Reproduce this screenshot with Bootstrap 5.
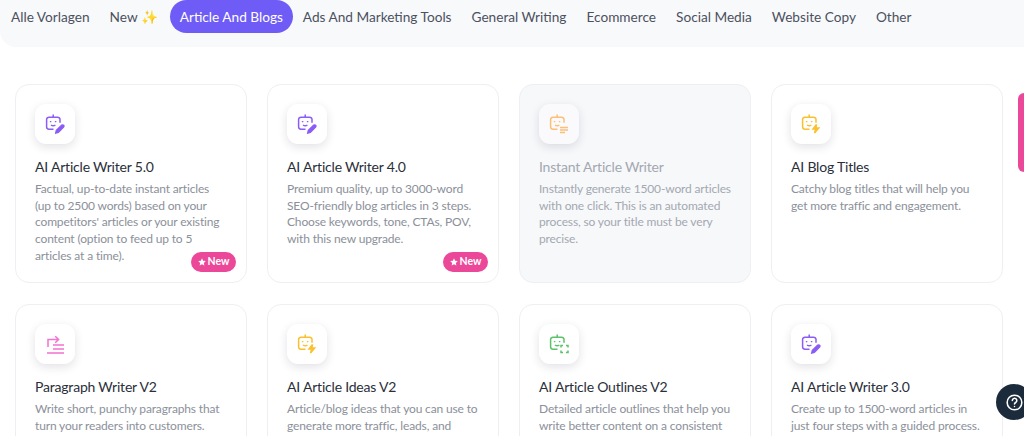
<!DOCTYPE html>
<html lang="en">
<head>
    <meta charset="UTF-8">
    <meta name="viewport" content="width=device-width, initial-scale=1.0">
    <title>Vorlagen</title>
    <link href="https://cdn.jsdelivr.net/npm/bootstrap@5.3.0/dist/css/bootstrap.min.css" rel="stylesheet">
    <script src="https://cdn.jsdelivr.net/npm/bootstrap@5.3.0/dist/js/bootstrap.bundle.min.js"></script>
    <style>
        html, body {
            height: 436px;
            overflow: hidden;
        }
        body {
            font-family: "Lato", "Liberation Sans", sans-serif;
            background: #fff;
            position: relative;
        }
        .tab-bar {
            height: 47px;
            background: #f8f9fb;
            border-bottom-left-radius: 16px;
            padding-left: 1px;
        }
        .tab-link {
            display: block;
            height: 33px;
            line-height: 35px;
            padding: 0 10px;
            font-size: 13.65px;
            color: #4b5160;
            text-decoration: none;
            border-radius: 17px;
            white-space: nowrap;
        }
        .tab-link.on {
            background: #6f5cf6;
            color: #fff;
            margin-left: 2px;
            width: 123px;
            text-align: center;
            padding: 0;
        }
        .tool-area {
            height: 389px;
            overflow: hidden;
        }
        .tool-grid {
            display: grid;
            grid-template-columns: repeat(4, 232px);
            gap: 21px 20px;
            padding: 37px 0 0 15px;
        }
        .tool-card {
            height: 199px;
            border: 1px solid #eeeff2;
            border-radius: 14px;
            padding: 19px;
            position: relative;
            background: #fff;
        }
        .tool-card.off {
            background: #f7f8fa;
        }
        .tool-card.off .tool-title, .tool-card.off .tool-text {
            color: #a3a8b1;
        }
        .tool-card.off .icon-box {
            background: #fafafc;
        }
        .icon-box {
            width: 40px;
            height: 40px;
            border-radius: 11px;
            background: #fff;
            box-shadow: 0 3px 10px rgba(30, 30, 60, .13);
            margin-bottom: 14px;
        }
        .icon-box svg {
            width: 20px;
            height: 20px;
            fill: none;
            stroke-width: 1.5;
        }
        .tool-title {
            font-size: 14px;
            letter-spacing: -.2px;
            line-height: 18px;
            font-weight: 400;
            color: #2a2f3a;
            margin-bottom: 5px;
        }
        .tool-text {
            font-size: 12px;
            letter-spacing: -.15px;
            line-height: 16.7px;
            color: #8b909a;
            margin: 0;
        }
        .new-tag {
            position: absolute;
            right: 10px;
            bottom: 10px;
            height: 20px;
            width: 45px;
            border-radius: 10px;
            background: #ec4899;
            color: #fff;
            font-size: 10.5px;
            font-weight: 700;
            gap: 2px;
        }
        .new-tag svg {
            width: 8px;
            height: 8px;
            fill: #fff;
        }
        .side-tab {
            position: absolute;
            right: 0;
            top: 93px;
            width: 6px;
            height: 79px;
            background: #ec4899;
            border-radius: 6px 0 0 6px;
        }
        .help-btn {
            position: absolute;
            left: 996px;
            top: 384px;
            width: 36px;
            height: 36px;
            border-radius: 50%;
            background: #1c2b3c;
        }
    </style>
</head>
<body>
<!-- Category tabs -->
<div class="tab-bar d-flex align-items-start">
    <a class="tab-link" href="#">Alle Vorlagen</a>
    <a class="tab-link" href="#">New ✨</a>
    <a class="tab-link on" href="#">Article And Blogs</a>
    <a class="tab-link" href="#">Ads And Marketing Tools</a>
    <a class="tab-link" href="#">General Writing</a>
    <a class="tab-link" href="#">Ecommerce</a>
    <a class="tab-link" href="#">Social Media</a>
    <a class="tab-link" href="#">Website Copy</a>
    <a class="tab-link" href="#">Other</a>
</div>

<!-- Shared icon parts -->
<svg width="0" height="0" class="position-absolute">
    <defs>
        <g id="bot">
            <path d="M8.2 .4v2.8"/>
            <path d="M8.5 15.2H4a2.4 2.4 0 0 1-2.4-2.4V5.6A2.4 2.4 0 0 1 4 3.2h8.6A2.4 2.4 0 0 1 15 5.6v3.2"/>
            <path d="M5.6 7v1.2M10.6 7v1.2M6 11c1.2.9 3.2.9 4.4 0"/>
        </g>
        <g id="pen">
            <path d="M10.8 19l.6-2.6 5.4-5.2c1.5-.8 2.6.5 1.7 1.8l-5.2 5.3z"/>
        </g>
        <path id="star5" d="M5 .4l1.4 3 3.3.4-2.4 2.3.6 3.3L5 7.8 2.1 9.4l.6-3.3L.3 3.8l3.3-.4z"/>
    </defs>
</svg>

<div class="tool-area">
<div class="tool-grid">
    <div class="tool-card">
        <div class="icon-box d-flex align-items-center justify-content-center">
            <svg viewBox="0 0 20 20" stroke="#8b5cf6"><use href="#bot"/><use href="#pen" fill="#8b5cf6"/></svg>
        </div>
        <h5 class="tool-title">AI Article Writer 5.0</h5>
        <p class="tool-text">Factual, up-to-date instant articles (up to 2500 words) based on your competitors' articles or your existing content (option to feed up to 5 articles at a time).</p>
        <span class="new-tag d-flex align-items-center justify-content-center"><svg viewBox="0 0 10 10"><use href="#star5"/></svg>New</span>
    </div>
    <div class="tool-card">
        <div class="icon-box d-flex align-items-center justify-content-center">
            <svg viewBox="0 0 20 20" stroke="#8b5cf6"><use href="#bot"/><use href="#pen" fill="#8b5cf6"/></svg>
        </div>
        <h5 class="tool-title">AI Article Writer 4.0</h5>
        <p class="tool-text">Premium quality, up to 3000-word SEO-friendly blog articles in 3 steps. Choose keywords, tone, CTAs, POV, with this new upgrade.</p>
        <span class="new-tag d-flex align-items-center justify-content-center"><svg viewBox="0 0 10 10"><use href="#star5"/></svg>New</span>
    </div>
    <div class="tool-card off">
        <div class="icon-box d-flex align-items-center justify-content-center">
            <svg viewBox="0 0 20 20" stroke="#fbbf77"><use href="#bot"/><path d="M11 13.4h8M11 16h8M11 18.6h5"/></svg>
        </div>
        <h5 class="tool-title">Instant Article Writer</h5>
        <p class="tool-text">Instantly generate 1500-word articles with one click. This is an automated process, so your title must be very precise.</p>
    </div>
    <div class="tool-card">
        <div class="icon-box d-flex align-items-center justify-content-center">
            <svg viewBox="0 0 20 20" stroke="#fbc02d"><use href="#bot"/><path d="M15.5 10.5l-3.5 4.4h2.8l-1.3 4 4.2-5h-2.8z" fill="#fbc02d"/></svg>
        </div>
        <h5 class="tool-title">AI Blog Titles</h5>
        <p class="tool-text">Catchy blog titles that will help you get more traffic and engagement.</p>
    </div>
    <div class="tool-card">
        <div class="icon-box d-flex align-items-center justify-content-center">
            <svg viewBox="0 0 20 20" stroke="#f472d0"><path d="M3 13V5.5h10M10.2 2.2l3.4 3.3-3.4 3.3M8 11h11M8 15h11M2 19h17"/></svg>
        </div>
        <h5 class="tool-title">Paragraph Writer V2</h5>
        <p class="tool-text">Write short, punchy paragraphs that turn your readers into customers.</p>
    </div>
    <div class="tool-card">
        <div class="icon-box d-flex align-items-center justify-content-center">
            <svg viewBox="0 0 20 20" stroke="#fbc02d"><use href="#bot"/><path d="M15.5 10.5l-3.5 4.4h2.8l-1.3 4 4.2-5h-2.8z" fill="#fbc02d"/></svg>
        </div>
        <h5 class="tool-title">AI Article Ideas V2</h5>
        <p class="tool-text">Article/blog ideas that you can use to generate more traffic, leads, and</p>
    </div>
    <div class="tool-card">
        <div class="icon-box d-flex align-items-center justify-content-center">
            <svg viewBox="0 0 20 20" stroke="#5cc26a"><use href="#bot"/><path d="M12 13.5v-2h2M17 11.5h2v2M19 16.5v2h-2M14 18.5h-2v-2"/></svg>
        </div>
        <h5 class="tool-title">AI Article Outlines V2</h5>
        <p class="tool-text">Detailed article outlines that help you write better content on a consistent</p>
    </div>
    <div class="tool-card">
        <div class="icon-box d-flex align-items-center justify-content-center">
            <svg viewBox="0 0 20 20" stroke="#8b5cf6"><use href="#bot"/><use href="#pen" fill="#8b5cf6"/></svg>
        </div>
        <h5 class="tool-title">AI Article Writer 3.0</h5>
        <p class="tool-text">Create up to 1500-word articles in just four steps with a guided process.</p>
    </div>
</div>
</div>

<div class="side-tab"></div>
<div class="help-btn d-flex align-items-center justify-content-center">
    <svg width="17" height="17" viewBox="0 0 22 22" fill="none" stroke="#fff" stroke-width="2" stroke-linecap="round">
        <circle cx="11" cy="11" r="9.5"/>
        <path d="M8.2 8.4a2.9 2.9 0 1 1 4.3 2.6c-.9.5-1.5 1-1.5 2"/>
        <path d="M11 16.2v.1"/>
    </svg>
</div>
</body>
</html>
